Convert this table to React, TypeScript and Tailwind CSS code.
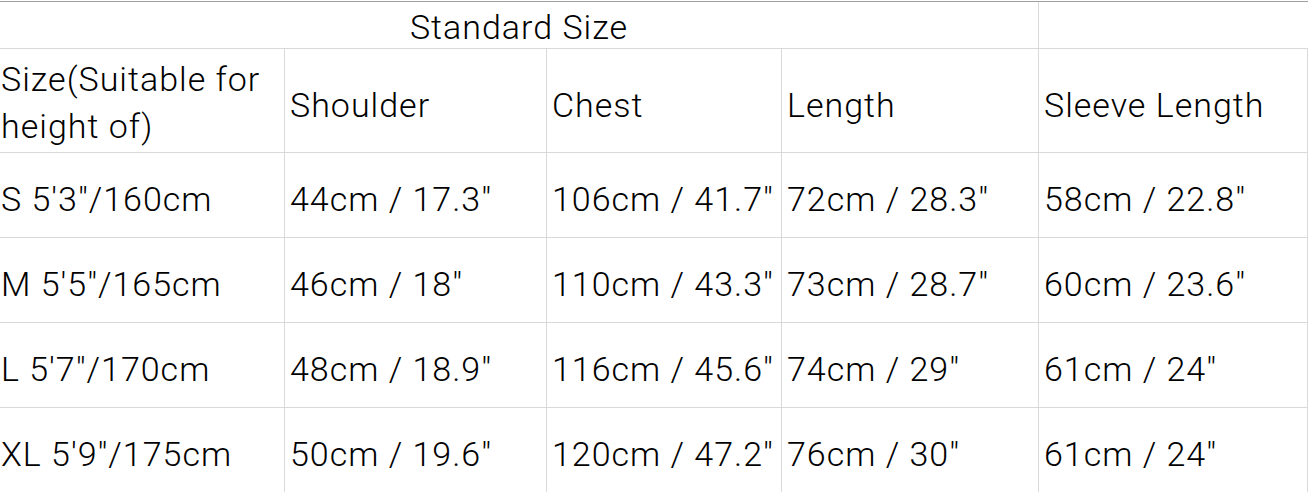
import React from "react";

const rows = [
  ["S 5'3\"/160cm", "44cm / 17.3\"", "106cm / 41.7\"", "72cm / 28.3\"", "58cm / 22.8\""],
  ["M 5'5\"/165cm", "46cm / 18\"", "110cm / 43.3\"", "73cm / 28.7\"", "60cm / 23.6\""],
  ["L 5'7\"/170cm", "48cm / 18.9\"", "116cm / 45.6\"", "74cm / 29\"", "61cm / 24\""],
  ["XL 5'9\"/175cm", "50cm / 19.6\"", "120cm / 47.2\"", "76cm / 30\"", "61cm / 24\""],
];

const base = "border-r border-b border-[#d9d9d9] flex items-center pt-[8px] whitespace-nowrap leading-none";
const cell = `${base} pl-[5px]`;
const firstCell = `${base} pl-[1px]`;

export default function App() {
  return (
    <div
      className="w-[1308px] h-[492px] bg-white overflow-hidden text-black text-[34px] font-light tracking-[1px]"
      style={{ fontFamily: 'Roboto, "Noto Sans", sans-serif' }}
    >
      <div className="mt-px border-t border-[#a0a0a0] grid grid-cols-[285px_262px_235px_257px_1fr] grid-rows-[47px_104px_85px_85px_85px_85px]">
        <div className="col-span-4 border-r border-b border-[#d9d9d9] flex items-center justify-center leading-none pt-[4px]">
          Standard Size
        </div>
        <div className="border-b border-[#d9d9d9]"></div>
        <div className="border-r border-b border-[#d9d9d9] pl-[1px] pt-[7px] leading-[47px]">
          Size(Suitable for
          <br />
          height of)
        </div>
        <div className={cell}>Shoulder</div>
        <div className={cell}>Chest</div>
        <div className={cell}>Length</div>
        <div className={cell}>Sleeve Length</div>
        {rows.map((r, i) =>
          r.map((c, j) => (
            <div key={`${i}-${j}`} className={j === 0 ? firstCell : cell}>
              {c}
            </div>
          ))
        )}
      </div>
    </div>
  );
}
